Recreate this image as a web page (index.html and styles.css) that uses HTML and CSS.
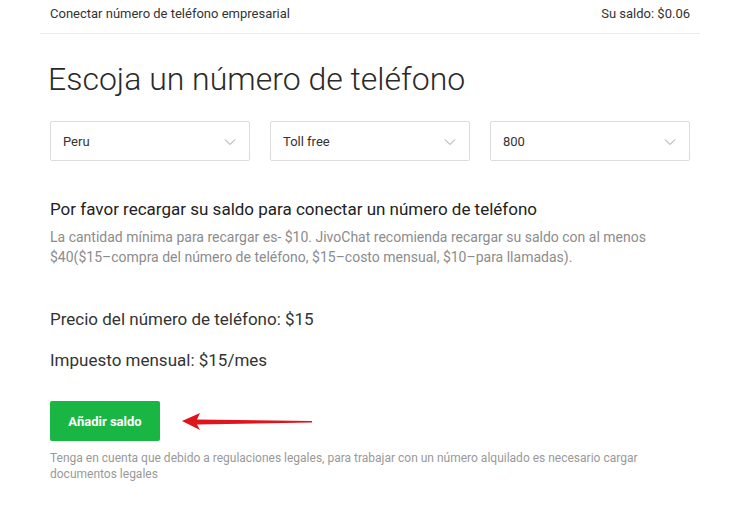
FILE: index.html
```html
<!DOCTYPE html>
<html lang="es">
<head>
<meta charset="utf-8">
<link rel="stylesheet" href="styles.css">
</head>
<body>
<div class="page">
  <header class="top">
    <span>Conectar número de teléfono empresarial</span>
    <span>Su saldo: $0.06</span>
  </header>
  <main class="content">
    <h1 class="title">Escoja un número de teléfono</h1>
    <div class="selects">
      <div class="select"><span>Peru</span><svg class="chev" viewBox="0 0 12 8" width="12" height="8"><path d="M1 1.5 L6 6.5 L11 1.5" fill="none" stroke="#9a9a9a" stroke-width="1"/></svg></div>
      <div class="select"><span>Toll free</span><svg class="chev" viewBox="0 0 12 8" width="12" height="8"><path d="M1 1.5 L6 6.5 L11 1.5" fill="none" stroke="#9a9a9a" stroke-width="1"/></svg></div>
      <div class="select"><span>800</span><svg class="chev" viewBox="0 0 12 8" width="12" height="8"><path d="M1 1.5 L6 6.5 L11 1.5" fill="none" stroke="#9a9a9a" stroke-width="1"/></svg></div>
    </div>
    <h2 class="subtitle">Por favor recargar su saldo para conectar un número de teléfono</h2>
    <p class="desc">La cantidad mínima para recargar es- $10. JivoChat recomienda recargar su saldo con al menos $40($15–compra del número de teléfono, $15–costo mensual, $10–para llamadas).</p>
    <p class="price first">Precio del número de teléfono: $15</p>
    <p class="price">Impuesto mensual: $15/mes</p>
    <div class="action">
      <button class="btn">Añadir saldo</button>
      <svg class="arrow" viewBox="0 0 140 24" width="140" height="24">
        <path d="M2 11 L20 3 L17 9.5 L132 11 L132 12.5 L17 14.5 L20 20 Z" fill="#e0141b"/>
      </svg>
    </div>
    <p class="note">Tenga en cuenta que debido a regulaciones legales, para trabajar con un número alquilado es necesario cargar documentos legales</p>
  </main>
</div>
</body>
</html>
```
FILE: styles.css
```css
* { box-sizing: border-box; }
body {
  margin: 0;
  background: #fff;
  font-family: Roboto, "Liberation Sans", sans-serif;
  color: #222;
}
.page {
  width: 660px;
  margin-left: 40px;
}
.top {
  display: flex;
  justify-content: space-between;
  padding: 5px 10px 0 10px;
  height: 34px;
  font-size: 13px;
  line-height: 17px;
  color: #333;
  border-bottom: 1px solid #ebebeb;
}
.content {
  padding: 0 10px;
}
.title {
  margin: 25px 0 0 -2px;
  font-size: 32px;
  font-weight: 300;
  line-height: 40px;
  color: #2a2a2a;
}
.selects {
  display: grid;
  grid-template-columns: 200px 200px 200px;
  column-gap: 20px;
  margin-top: 22px;
}
.select {
  height: 40px;
  border: 1px solid #dcdcdc;
  border-radius: 2px;
  display: flex;
  align-items: center;
  justify-content: space-between;
  padding: 0 13px 0 12px;
  font-size: 13px;
  color: #333;
}
.chev { margin-top: 2px; }
.subtitle {
  margin: 37px 0 0 0;
  font-size: 17px;
  font-weight: 400;
  line-height: 22px;
  color: #222;
}
.desc {
  margin: 7px 0 0 0;
  font-size: 14px;
  line-height: 20px;
  color: #8c8c8c;
  max-width: 620px;
}
.price {
  margin: 0;
  font-size: 17px;
  line-height: 22px;
  color: #333;
}
.price.first { margin-top: 41px; }
.price + .price { margin-top: 19px; }
.action {
  display: flex;
  align-items: center;
  margin-top: 30px;
}
.btn {
  width: 110px;
  height: 40px;
  border: none;
  border-radius: 2px;
  background: #19b644;
  color: #fff;
  font-family: Roboto, "Liberation Sans", sans-serif;
  font-size: 13px;
  font-weight: 700;
  padding: 0;
}
.arrow {
  margin-left: 20px;
  margin-top: 2px;
}
.note {
  margin: 9px 0 0 0;
  font-size: 12px;
  line-height: 16px;
  color: #999;
  max-width: 600px;
}
```
